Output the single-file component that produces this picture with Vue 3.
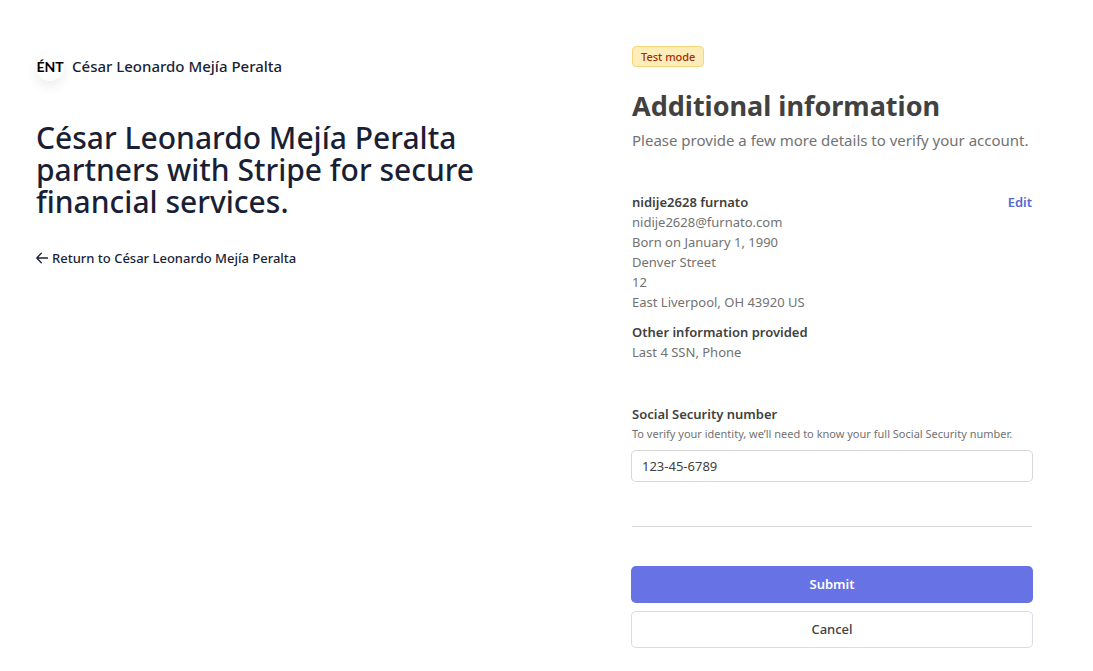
<script setup>
import { ref } from 'vue'

const business = 'César Leonardo Mejía Peralta'
const ssn = ref('123-45-6789')
const details = [
  'nidije2628@furnato.com',
  'Born on January 1, 1990',
  'Denver Street',
  '12',
  'East Liverpool, OH 43920 US',
]
</script>

<template>
  <div class="page">
    <aside class="intro">
      <div class="brand">
        <span class="logo">ÉNT</span>
        <span class="brand-name">{{ business }}</span>
      </div>
      <h1 class="headline">{{ business }} partners with Stripe for secure financial services.</h1>
      <a class="return" href="#">
        <svg class="arrow" width="12" height="12" viewBox="0 0 12 12" aria-hidden="true">
          <path d="M5.3 1.2 0.8 6l4.5 4.8M0.8 6h10.8" fill="none" stroke="currentColor" stroke-width="1.3" stroke-linecap="round" stroke-linejoin="round" />
        </svg>
        <span>Return to {{ business }}</span>
      </a>
    </aside>

    <main class="panel">
      <span class="badge">Test mode</span>
      <h2 class="title">Additional information</h2>
      <p class="subtitle">Please provide a few more details to verify your account.</p>

      <section class="person">
        <div class="person-head">
          <h3 class="strong">nidije2628 furnato</h3>
          <a class="edit" href="#">Edit</a>
        </div>
        <p v-for="line in details" :key="line" class="line">{{ line }}</p>
        <h3 class="strong other">Other information provided</h3>
        <p class="line">Last 4 SSN, Phone</p>
      </section>

      <form class="form" @submit.prevent>
        <label class="strong" for="ssn">Social Security number</label>
        <p id="ssn-hint" class="hint">To verify your identity, we’ll need to know your full Social Security number.</p>
        <input id="ssn" v-model="ssn" class="field" type="text" aria-describedby="ssn-hint" />
        <hr class="rule" />
        <button class="button primary" type="submit">Submit</button>
        <button class="button secondary" type="button">Cancel</button>
      </form>
    </main>
  </div>
</template>

<style>
body {
  margin: 0;
  background: #fff;
}
</style>

<style scoped>
.page {
  display: grid;
  grid-template-columns: minmax(0, 1fr) 400px;
  box-sizing: border-box;
  padding: 0 61px 23px 36px;
  font-family: "Segoe UI", "Noto Sans", "Open Sans", sans-serif;
  font-size: 13px;
  line-height: 20px;
  color: #727272;
}

h1, h2, h3, p {
  margin: 0;
}

.intro {
  max-width: 460px;
  padding-top: 53px;
  color: #1a1f36;
}

.brand {
  display: flex;
  align-items: flex-start;
  gap: 8px;
}

.brand-name {
  font-size: 15px;
  font-weight: 500;
  line-height: 26px;
}

.logo {
  width: 28px;
  height: 28px;
  border-radius: 50%;
  box-shadow: 0 5px 12px rgba(0, 0, 0, 0.08);
  font-family: Lato, sans-serif;
  font-size: 14px;
  font-weight: 700;
  line-height: 28px;
  text-align: center;
  color: #000;
}

.headline {
  margin-top: 41px;
  font-size: 30px;
  font-weight: 500;
  line-height: 32px;
}

.return {
  display: inline-flex;
  align-items: center;
  gap: 4px;
  margin-top: 30px;
  font-weight: 500;
  color: inherit;
  text-decoration: none;
}

.panel {
  padding-top: 46px;
}

.badge {
  display: block;
  box-sizing: border-box;
  width: fit-content;
  padding: 1px 8px 0;
  border: 1px solid #f5d77a;
  border-radius: 4px;
  background: #fcedb9;
  font-size: 11px;
  font-weight: 500;
  line-height: 18px;
  color: #a82c00;
}

.title {
  margin-top: 21px;
  font-size: 27px;
  font-weight: 700;
  line-height: 36px;
  color: #414141;
}

.subtitle {
  margin-top: 4px;
  font-size: 15px;
  line-height: 24px;
}

.person {
  margin-top: 40px;
}

.person-head {
  display: flex;
  justify-content: space-between;
}

.strong {
  display: block;
  font-size: 13px;
  font-weight: 600;
  line-height: 20px;
  color: #414141;
}

.edit {
  font-weight: 600;
  color: #5469d4;
  text-decoration: none;
}

.other {
  margin-top: 10px;
}

.form {
  margin-top: 42px;
}

.hint {
  font-size: 11px;
}

.field {
  display: block;
  box-sizing: border-box;
  width: 100%;
  height: 30px;
  margin-top: 7px;
  padding: 0 10px;
  border: 0;
  border-radius: 4px;
  box-shadow: 0 0 0 1px #d8d8d8;
  background: #fff;
  font: inherit;
  color: #414141;
}

.rule {
  height: 1px;
  margin: 45px 0 40px;
  border: 0;
  background: #d8d8d8;
}

.button {
  display: block;
  width: 100%;
  height: 35px;
  padding: 0 0 1px;
  border: 0;
  border-radius: 4px;
  font: inherit;
  font-weight: 600;
}

.primary {
  background: #6772e5;
  box-shadow: 0 0 0 1px #6772e5;
  color: #fff;
}

.secondary {
  margin-top: 10px;
  background: #fff;
  box-shadow: 0 0 0 1px #d9dce5;
  color: #414141;
  font-weight: 500;
}
</style>
